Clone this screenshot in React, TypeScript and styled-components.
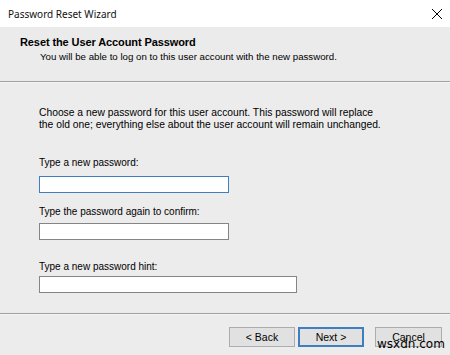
import React from "react";
import styled, { createGlobalStyle } from "styled-components";

const Global = createGlobalStyle`
  html, body { margin: 0; padding: 0; background: #ececec; }
  body { width: 450px; height: 355px; overflow: hidden; }
`;

const Window = styled.div`
  position: relative;
  width: 450px;
  height: 355px;
  display: flex;
  flex-direction: column;
  background: #ececec;
  font-family: "Liberation Sans", Arial, sans-serif;
  font-size: 10px;
  color: #000;
  overflow: hidden;
`;

const TitleBar = styled.div`
  height: 27px;
  flex: none;
  background: #fff;
  display: flex;
  align-items: center;
  justify-content: space-between;
  padding: 0 7px 0 8px;
  box-sizing: border-box;
`;

const TitleText = styled.span`
  font-family: "Noto Sans", "Open Sans", sans-serif;
  font-size: 10px;
  color: #111;
`;

const Header = styled.div`
  height: 55px;
  flex: none;
  background: #ebebeb;
  border-bottom: 1px solid #a0a0a0;
  padding: 9px 0 0 20px;
  box-sizing: border-box;
`;

const Heading = styled.div`
  font-weight: bold;
  font-size: 11px;
  line-height: 13px;
  letter-spacing: -0.1px;
`;

const Sub = styled.div`
  padding-left: 20px;
  line-height: 13px;
  margin-top: 1px;
  font-size: 9.7px;
`;

const Body = styled.div`
  flex: 1;
  min-height: 0;
  overflow: hidden;
  padding: 24px 0 0 39px;
  display: flex;
  flex-direction: column;
  border-top: 1px solid #f5f5f5;
`;

const Para = styled.p`
  margin: 0;
  font-size: 10.3px;
  line-height: 11.5px;
  width: 380px;
`;

const Field = styled.div<{ $mt: number; $gap: number }>`
  display: flex;
  flex-direction: column;
  margin-top: ${(p) => p.$mt}px;
  & > label {
    margin-bottom: ${(p) => p.$gap}px;
  }
`;

const Label = styled.label`
  line-height: 12px;
`;

const Input = styled.div<{ $w: number; $focus?: boolean }>`
  width: ${(p) => p.$w}px;
  height: 17px;
  box-sizing: border-box;
  background: #fff;
  border: 1px solid ${(p) => (p.$focus ? "#3f7fc0" : "#858585")};
`;

const Footer = styled.div`
  height: 42px;
  flex: none;
  border-top: 1px solid #a0a0a0;
  box-shadow: inset 0 1px 0 #f5f5f5;
  display: flex;
  justify-content: flex-end;
  align-items: flex-start;
  padding: 13px 8px 0 0;
  box-sizing: border-box;
`;

const Button = styled.div<{ $primary?: boolean; $ml?: number; $w?: number }>`
  width: ${(p) => p.$w ?? 66}px;
  height: 20px;
  box-sizing: border-box;
  margin-left: ${(p) => p.$ml ?? 0}px;
  background: #e1e1e1;
  border: ${(p) => (p.$primary ? "2px solid #3f7fc0" : "1px solid #adadad")};
  display: flex;
  align-items: center;
  justify-content: center;
  font-size: 10.5px;
`;

const Watermark = styled.span`
  position: absolute;
  left: 377px;
  top: 337px;
  font-family: "DejaVu Sans", sans-serif;
  font-size: 12px;
  color: #000;
`;

export default function App() {
  return (
    <>
      <Global />
      <Window>
        <TitleBar>
          <TitleText>Password Reset Wizard</TitleText>
          <svg width="12" height="12" viewBox="0 0 12 12">
            <path d="M1 1 L11 11 M11 1 L1 11" stroke="#000" strokeWidth="1" fill="none" />
          </svg>
        </TitleBar>
        <Header>
          <Heading>Reset the User Account Password</Heading>
          <Sub>You will be able to log on to this user account with the new password.</Sub>
        </Header>
        <Body>
          <Para>
            Choose a new password for this user account. This password will replace
            <br />
            the old one; everything else about the user account will remain unchanged.
          </Para>
          <Field $mt={27} $gap={7}>
            <Label>Type a new password:</Label>
            <Input $w={190} $focus />
          </Field>
          <Field $mt={13} $gap={5}>
            <Label>Type the password again to confirm:</Label>
            <Input $w={190} />
          </Field>
          <Field $mt={21} $gap={3}>
            <Label>Type a new password hint:</Label>
            <Input $w={258} />
          </Field>
        </Body>
        <Footer>
          <Button>&lt; Back</Button>
          <Button $primary $ml={3}>Next &gt;</Button>
          <Button $ml={11} $w={67}>Cancel</Button>
        </Footer>
        <Watermark>wsxdn.com</Watermark>
      </Window>
    </>
  );
}
